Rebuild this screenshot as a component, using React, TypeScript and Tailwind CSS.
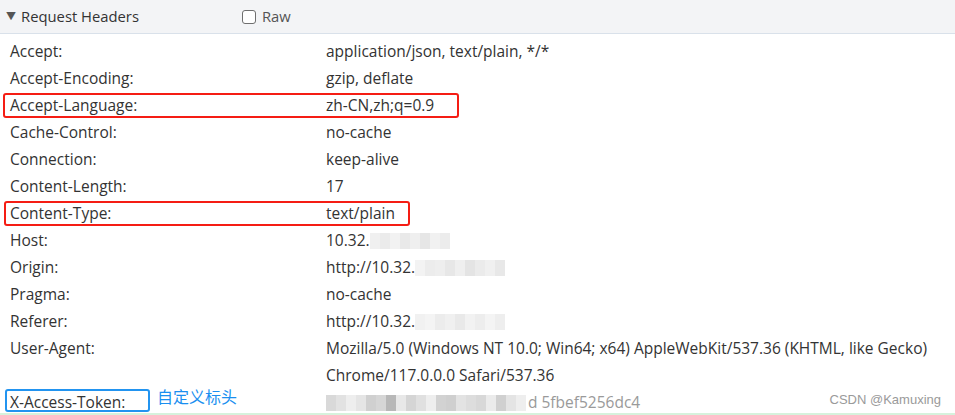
import React from "react";

const font = { fontFamily: '"Open Sans", "Noto Sans CJK SC", sans-serif' };

function Blur({ shades }: { shades: string[] }) {
  return (
    <span className="inline-flex h-[16px] align-middle">
      {shades.map((c, i) => (
        <span key={i} className="inline-block h-full w-[10px]" style={{ backgroundColor: c }} />
      ))}
    </span>
  );
}

type Row = { k: string; v: React.ReactNode; box?: "red1" | "red2" | "blue" };

export default function App() {
  const rows: Row[] = [
    { k: "Accept:", v: "application/json, text/plain, */*" },
    { k: "Accept-Encoding:", v: "gzip, deflate" },
    { k: "Accept-Language:", v: "zh-CN,zh;q=0.9", box: "red1" },
    { k: "Cache-Control:", v: "no-cache" },
    { k: "Connection:", v: "keep-alive" },
    { k: "Content-Length:", v: "17" },
    { k: "Content-Type:", v: "text/plain", box: "red2" },
    {
      k: "Host:",
      v: (
        <span className="inline-flex items-center">
          10.32.
          <Blur shades={["#f0f0f0", "#ebebeb", "#f2f2f2", "#e9e9e9", "#efefef", "#e6e6e6", "#f1f1f1", "#ececec"]} />
        </span>
      ),
    },
    {
      k: "Origin:",
      v: (
        <span className="inline-flex items-center">
          http://10.32.
          <Blur shades={["#f3f3f3", "#ececec", "#eeeeee", "#e7e7e7", "#efefef", "#e4e4e4", "#ebebeb", "#f0f0f0", "#e8e8e8"]} />
        </span>
      ),
    },
    { k: "Pragma:", v: "no-cache" },
    {
      k: "Referer:",
      v: (
        <span className="inline-flex items-center">
          http://10.32.
          <Blur shades={["#f1f1f1", "#f4f4f4", "#ececec", "#f0f0f0", "#e9e9e9", "#f2f2f2", "#ededed", "#f4f4f4", "#eeeeee"]} />
        </span>
      ),
    },
    {
      k: "User-Agent:",
      v: (
        <>
          Mozilla/5.0 (Windows NT 10.0; Win64; x64) AppleWebKit/537.36 (KHTML, like Gecko)
          <br />
          Chrome/117.0.0.0 Safari/537.36
        </>
      ),
    },
    {
      k: "X-Access-Token:",
      box: "blue",
      v: (
        <span className="inline-flex items-center">
          <Blur shades={["#d9d9d9", "#e2e2e2", "#eeeeee", "#e5e5e5", "#d0d0d0", "#d6d6d6", "#b8b8b8", "#e8e8e8", "#d5d5d5", "#e0e0e0", "#eeeeee", "#d2d2d2", "#cfcfcf", "#e3e3e3", "#dddddd", "#d8d8d8", "#ebebeb", "#d0d0d0", "#e4e4e4", "#eeeeee"]} />
          <span className="text-[#9a9a9a] ml-[2px]">d 5fbef5256dc4</span>
        </span>
      ),
    },
  ];

  return (
    <div className="w-[955px] h-[415px] bg-white overflow-hidden relative text-[#333] text-[15.5px]" style={font}>
      <div className="h-[34px] bg-[#f3f4f6] border-b border-[#d9e1ea] flex items-center">
        <span className="ml-[6px] mr-[5px] text-[10px] text-[#555]">▼</span>
        <span className="text-[#333] text-[14.8px]">Request Headers</span>
        <span className="ml-[103px] w-[14px] h-[14px] border border-[#6f6f6f] rounded-[3px] bg-white" />
        <span className="ml-[6px] text-[#555] text-[14.8px]">Raw</span>
      </div>
      <div className="pt-[4px]">
        {rows.map((r) => (
          <div key={r.k} className="relative flex leading-[27px]">
            <div className="w-[326px] pl-[10px] shrink-0">{r.k}</div>
            <div className="whitespace-nowrap">{r.v}</div>
            {r.box === "red1" && (
              <div className="absolute left-[3px] top-[1px] w-[456px] h-[25px] border-[2.5px] border-[#f51d14] rounded-[3px]" />
            )}
            {r.box === "red2" && (
              <div className="absolute left-[4px] top-[1px] w-[406px] h-[25px] border-[2.5px] border-[#f51d14] rounded-[3px]" />
            )}
            {r.box === "blue" && (
              <>
                <div className="absolute left-[5px] top-[0px] w-[145px] h-[23px] border-[2.5px] border-[#2294f0] rounded-[3px]" />
                <div className="absolute left-[157px] top-[-5px] text-[#1a8ff0] text-[16px]">自定义标头</div>
              </>
            )}
          </div>
        ))}
      </div>
      <div className="absolute right-[14px] bottom-[6px] text-[13px] text-[#9a9a9a]" style={{ fontFamily: '"Liberation Sans", sans-serif' }}>
        CSDN @Kamuxing
      </div>
      <div className="absolute left-0 right-0 bottom-0 h-[2px] bg-[#d6f2dc]" />
    </div>
  );
}
